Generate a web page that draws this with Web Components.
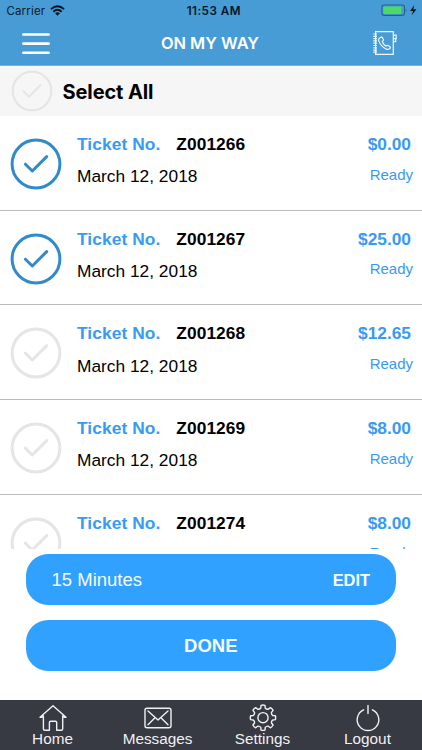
<!DOCTYPE html>
<html lang="en">
<head>
<meta charset="utf-8">
<title>On My Way</title>
<style>
html,body{margin:0;padding:0}
body{width:422px;height:750px;overflow:hidden;background:#fff;font-family:"Liberation Sans",Arial,sans-serif;color:#000}
</style>
</head>
<body>
<way-app></way-app>
<script>
const define = (name, html) => customElements.define(name, class extends HTMLElement {
  constructor() {
    super();
    const t = document.createElement('template');
    t.innerHTML = html;
    this.attachShadow({mode: 'open'}).append(t.content.cloneNode(true));
  }
});

define('check-mark', `<style>
:host{display:block;width:52px;height:52px;color:#e5e5e5;flex:none}
:host([on]){color:#318bca}
:host([small]){width:42px;height:42px}
svg{display:block;width:100%;height:100%}
:host([small]) g{stroke-width:2.6}
</style>
<svg viewBox="0 0 52 52"><g fill="none" stroke="currentColor" stroke-width="3" stroke-linecap="round" stroke-linejoin="round"><circle cx="26" cy="26" r="23.9"/><path d="M15.4 26.2L22.3 33L36.7 18.6"/></g></svg>`);

define('status-bar', `<style>
:host{display:flex;height:22px;align-items:center;font:11.4px/22px Inter,sans-serif;color:#0b1a28}
.side{flex:1;display:flex;align-items:center;padding-left:6.5px;letter-spacing:.2px}
.side svg{margin-left:5px;margin-top:-1px}
.time{font-weight:600;font-size:11.7px;letter-spacing:.45px;color:#071523;padding-left:3px}
.right{justify-content:flex-end;padding:0 4px 0 0}
.right svg{margin:-1px 0 0}
</style>
<div class="side">Carrier<svg width="15" height="11" viewBox="0 0 15 11"><g fill="none" stroke="#061421" stroke-width="1.9"><path d="M.9 4.1Q7.5-1.7 14.1 4.1"/><path d="M3.3 6.7Q7.5 3 11.7 6.7"/></g><path d="M5.1 8.3Q7.5 6.4 9.9 8.3L7.5 10.7Z" fill="#061421"/></svg></div>
<div class="time">11:53 AM</div>
<div class="side right"><svg width="37" height="13" viewBox="0 0 37 13"><rect x=".9" y="1" width="22.6" height="10.4" rx="2.3" fill="none" stroke="#25618f" stroke-width="1.1"/><rect x="2.3" y="2.4" width="18" height="7.6" rx="1" fill="#4cd964"/><path d="M24.8 4.5Q26.6 6.2 24.8 7.9Z" fill="#25618f"/><path d="M33.3 1.1L29.1 7H32L30.8 11.3L35.4 5.2H32.3Z" fill="#061421"/></svg></div>`);

define('title-bar', `<style>
:host{display:grid;grid-template-columns:1fr auto 1fr;height:43px;align-items:center;color:#fff;padding:0 24px 0 22px}
h1{margin:-2px 0 0;font:600 16.4px/20px Inter,sans-serif;letter-spacing:0}
svg{display:block;margin-top:-1px}
.menu{margin-top:0}
.book{justify-self:end}
</style>
<svg class="menu" width="28" height="22" viewBox="0 0 28 22"><path d="M1.3 1.5H26.7M1.3 10.6H26.7M1.3 19.7H26.7" stroke="#fff" stroke-width="2.6" stroke-linecap="round"/></svg>
<h1><slot></slot></h1>
<svg class="book" width="26" height="26" viewBox="0 0 26 26"><g fill="none" stroke="#eaf7ff" stroke-width="1.2"><path d="M3.6 1.6H21.3V24.4H3.6Z"/><path d="M1.3 4H5M1.3 6.3H5M1.3 8.6H5M1.3 10.9H5M1.3 13.2H5M1.3 15.5H5M1.3 17.8H5M1.3 20.1H5M1.3 22.2H5"/><path d="M21.3 5.1H24.2V8.6H21.3M21.3 8.6H23.7V11.7H21.3"/><path stroke-linejoin="round" d="M8 7.7L9.3 7.1Q10 6.9 10.4 7.6L11.4 9.6Q11.6 10.3 11.1 10.7L10.2 11.5Q11.4 14.4 13.9 16.1L15.3 15.4Q15.8 15.1 16.3 15.5L18.2 16.9Q18.7 17.4 18.2 18L17 19.1Q15.8 19.9 14 18.9Q8.6 16 6.6 10.6Q6.1 8.7 8 7.7Z"/></g></svg>`);

define('select-all', `<style>
:host{display:flex;height:50px;align-items:center;background:#f6f6f6;padding:0 10.5px;gap:10px;box-sizing:border-box;font:700 20px/24px Inter,sans-serif}
span{letter-spacing:-.1px;padding-top:1px}
check-mark{margin-top:-1px}
</style><check-mark small></check-mark><span><slot></slot></span>`);

customElements.define('ticket-row', class extends HTMLElement {
  connectedCallback() {
    const a = n => this.getAttribute(n);
    this.attachShadow({mode: 'open'}).innerHTML = `<style>
:host{display:flex;height:94.67px;box-sizing:border-box;border-bottom:1px solid #bcbcbc;padding:18px 9px 0 10px;font-size:17.33px;line-height:20px}
check-mark{margin-top:4px}
.info{flex:1;padding-left:15px;display:flex;flex-direction:column;gap:12.4px}
.head{display:flex;gap:16px;font-weight:700;letter-spacing:.08px}
.blue{color:#379bf5}
.cost{text-align:right;display:flex;flex-direction:column;gap:11.6px;color:#379bf5}
.price{font-weight:700;padding-right:2px}
.state{font-size:15px;line-height:18px}
</style>
<check-mark ${this.hasAttribute('on') ? 'on' : ''}></check-mark>
<div class="info"><div class="head"><span class="blue">Ticket No.</span><span>${a('no')}</span></div><div>March 12, 2018</div></div>
<div class="cost"><div class="price">${a('price')}</div><div class="state">Ready</div></div>`;
  }
});

define('pill-button', `<style>
:host{display:flex;height:51px;border-radius:22px;background:#31a1ff;color:#f5fbff;align-items:center;justify-content:center;font:700 18.5px/22px "Liberation Sans",sans-serif;padding:1px 26px 0 25.5px;box-sizing:border-box}
:host([split]){justify-content:space-between;font-weight:400;font-size:18.5px}
::slotted(b){font-size:16.4px}
</style><slot></slot>`);

define('tab-item', `<style>
:host{display:flex;flex-direction:column;align-items:center;color:#f1f1f4;font-size:15.3px;line-height:18px}
::slotted(svg){display:block;width:30px;height:28px;margin-bottom:-2px;fill:none;stroke:#f1f1f4;stroke-width:1.4;stroke-linecap:round;stroke-linejoin:round}
</style><slot name="icon"></slot><slot></slot>`);

define('tab-bar', `<style>
:host{display:grid;grid-template-columns:repeat(4,105px);height:50.5px;background:#373943;padding-top:4.5px;box-sizing:border-box}
</style>
<tab-item><svg slot="icon" viewBox="0 0 30 28"><path d="M2 13.2L15 1.7L28 13.2L26.2 13.3L24.7 12V24.7Q24.7 26.2 23.2 26.2H18.7V18.5Q18.7 17.2 17.4 17.2H12.7Q11.4 17.2 11.4 18.5V26.2H6.8Q5.4 26.2 5.4 24.7V12L3.8 13.3Z"/></svg>Home</tab-item>
<tab-item><svg slot="icon" viewBox="0 0 30 28"><rect x="2" y="4.2" width="26" height="19.6" rx="2"/><path d="M5 7L15 16L25 7M5 20.7L12 13.7M25 20.7L18 13.7"/></svg>Messages</tab-item>
<tab-item><svg slot="icon" id="gear" viewBox="0 0 30 28"><circle cx="15" cy="13.7" r="5.1"/></svg>Settings</tab-item>
<tab-item><svg slot="icon" viewBox="0 0 30 28"><path d="M10.6 5.8A10.8 10.8 0 1 0 19.4 5.8M15 1.4V9.5"/></svg>Logout</tab-item>`);

define('way-app', `<style>
:host{display:flex;flex-direction:column;width:422px;height:750px;background:#fff}
header{background:#489cd5;height:66px;flex:none;box-sizing:border-box;border-bottom:1px solid #74b1dc}
select-all{flex:none}
main{height:433px;overflow:hidden;flex:none}
section{padding:5px 26px 0;flex:1;display:flex;flex-direction:column;gap:15px}
tab-bar{flex:none}
</style>
<header><status-bar></status-bar><title-bar>ON MY WAY</title-bar></header>
<select-all>Select All</select-all>
<main>
<ticket-row on no="Z001266" price="$0.00"></ticket-row>
<ticket-row on no="Z001267" price="$25.00"></ticket-row>
<ticket-row no="Z001268" price="$12.65"></ticket-row>
<ticket-row no="Z001269" price="$8.00"></ticket-row>
<ticket-row no="Z001274" price="$8.00"></ticket-row>
</main>
<section><pill-button split><span>15 Minutes</span><b>EDIT</b></pill-button><pill-button>DONE</pill-button></section>
<tab-bar></tab-bar>`);

// Gear outline: eight rounded teeth around the hub
const gear = document.querySelector('way-app').shadowRoot.querySelector('tab-bar').shadowRoot.querySelector('#gear');
let d = '';
for (let i = 0; i < 8; i++) {
  const p = (r, deg) => { const t = (i * 45 + deg - 90) * Math.PI / 180; return (15 + r * Math.cos(t)).toFixed(2) + ' ' + (13.7 + r * Math.sin(t)).toFixed(2); };
  d += (i ? 'L' : 'M') + p(10, -13) + 'L' + p(12.5, -9) + 'Q' + p(13, 0) + ' ' + p(12.5, 9) + 'L' + p(10, 13) + 'Q' + p(8.9, 22.5) + ' ' + p(10, 32);
}
const outline = document.createElementNS('http://www.w3.org/2000/svg', 'path');
outline.setAttribute('d', d + 'Z');
gear.append(outline);
</script>
</body>
</html>
